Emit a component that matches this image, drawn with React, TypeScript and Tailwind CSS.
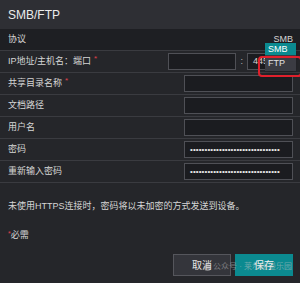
import React from 'react';

const font = { fontFamily: '"Liberation Sans", "Noto Sans CJK SC", sans-serif' };

const Star = () => <span className="ml-[3px] text-[8px] text-[#e0414a] relative -top-[3px]">*</span>;

const Row = ({ label, req, dark, children }: { label: string; req?: boolean; dark?: boolean; children?: React.ReactNode }) => (
    <div className={`h-[22px] border-b border-[#3a3b40] flex items-center pl-2 pr-[7px] ${dark ? 'bg-[#1e1f23]' : ''}`}>
        <span className="text-[9px] text-[#d6d6d6] leading-none">{label}</span>
        {req && <Star />}
        <div className="ml-auto flex items-center">{children}</div>
    </div>
);

const Box = ({ w, children }: { w: string; children?: React.ReactNode }) => (
    <div className={`${w} h-[17px] bg-[#1b1c20] border border-[#4f5056] flex items-center px-[5px] text-[9px] text-[#d6d6d6]`}>
        {children}
    </div>
);

const Dots = () => (
    <span className="text-[8px] leading-none text-[#e8e8e8] tracking-[0.1px]">{'•'.repeat(31)}</span>
);

const App = () => {
    return (
        <div className="relative w-[300px] h-[283px] bg-[#25262a] overflow-hidden" style={font}>
            <div className="h-[29px] bg-[#2e2f34] flex items-center pl-2 text-[12px] text-[#ececec]">SMB/FTP</div>
            <Row label="协议" dark>
                <span className="text-[9px] text-[#d6d6d6] leading-none">SMB</span>
            </Row>
            <Row label="IP地址/主机名：端口" req>
                <Box w="w-[68px]" />
                <span className="mx-[4px] text-[9px] text-[#bbbbbb]">:</span>
                <Box w="w-[46px]">445</Box>
            </Row>
            <Row label="共享目录名称" req>
                <Box w="w-[109px]" />
            </Row>
            <Row label="文档路径">
                <Box w="w-[109px]" />
            </Row>
            <Row label="用户名">
                <Box w="w-[109px]" />
            </Row>
            <Row label="密码">
                <Box w="w-[109px]"><Dots /></Box>
            </Row>
            <Row label="重新输入密码">
                <Box w="w-[109px]"><Dots /></Box>
            </Row>
            <div className="pl-2 pt-[19px] text-[9px] text-[#d6d6d6] leading-none">未使用HTTPS连接时，密码将以未加密的方式发送到设备。</div>
            <div className="pl-2 pt-[20px] text-[9px] text-[#d6d6d6] leading-none">
                <span className="text-[7px] text-[#e0414a] relative -top-[2px]">*</span>必需
            </div>
            <div className="flex justify-end gap-[4px] pr-[7px] pt-[14px]">
                <button className="w-[58px] h-[22px] bg-[#34353b] border border-[#55565c] text-[10px] text-[#e6e6e6]">取消</button>
                <button className="w-[58px] h-[22px] bg-[#0b8a90] text-[10px] text-[#f2f2f2]">保存</button>
            </div>

            {/* dropdown */}
            <div className="absolute left-[265px] top-[43px] w-[31px] shadow-md">
                <div className="h-[12px] bg-[#0b8a90] text-[9px] leading-[12px] pl-[3px] text-white">SMB</div>
                <div className="h-[16px] bg-[#3b3c43] text-[9px] leading-[16px] pl-[3px] text-[#e2e2e2]">FTP</div>
            </div>
            <div className="absolute left-[258px] top-[56px] w-[44px] h-[21px] border-2 border-[#e0202c] rounded-[4px]" />

            {/* watermark */}
            <div className="absolute left-[204px] top-[263px] flex items-center gap-[2px] text-[8px] text-[#c8c8c8] opacity-50 leading-none">
                <span className="w-[7px] h-[7px] rounded-full bg-[#c8c8c8] inline-block" />
                <span>公众号 · 莱尔碰碰乐园</span>
            </div>
        </div>
    );
};

export default App;
